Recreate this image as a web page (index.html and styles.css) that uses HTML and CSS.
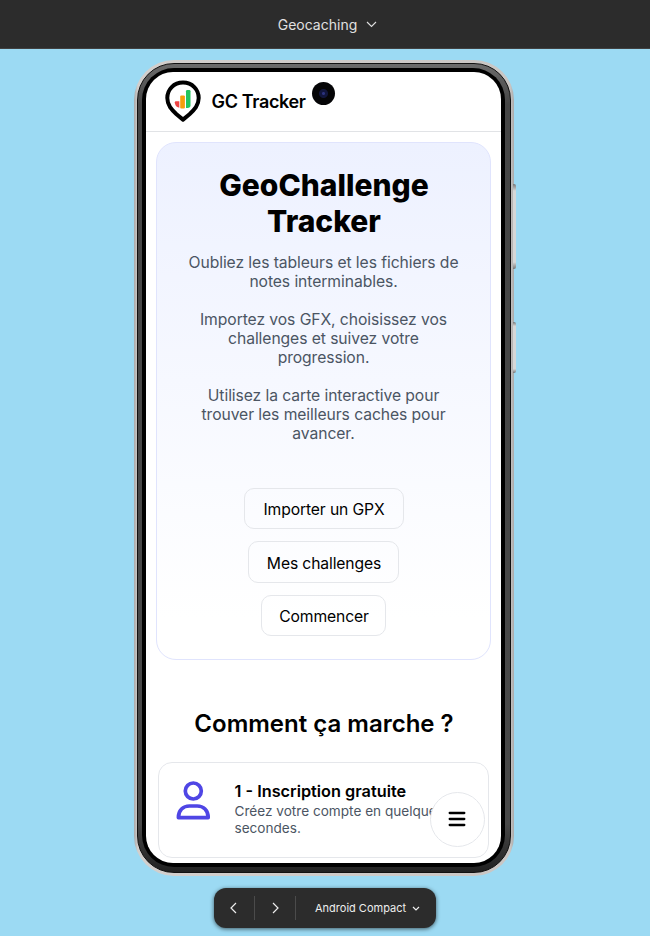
FILE: index.html
```html
<!DOCTYPE html>
<html lang="fr">
<head>
<meta charset="utf-8">
<title>Geocaching</title>
<link rel="stylesheet" href="styles.css">
</head>
<body>
<header class="topbar">
  <span>Geocaching</span>
  <svg width="11" height="7" viewBox="0 0 11 7" fill="none" stroke="#e0e0e0" stroke-width="1.1"><path d="M1 1l4.5 4.500L10 1"/></svg>
</header>
<main class="stage">
  <div class="phone">
    <i class="key volume"></i><i class="key power"></i>
    <div class="rim"><div class="bezel"><div class="screen">
      <div class="appbar">
        <svg class="logo" width="38" height="44" viewBox="0 0 38 44">
          <path d="M19 2.600C9.800 2.600 3.300 9.400 3.300 18.100c0 7.200 4.300 11.600 9.200 16.100L19 39.600l6.500-5.400c4.900-4.500 9.200-8.900 9.200-16.100C34.700 9.400 28.200 2.600 19 2.600z" fill="#fff" stroke="#000" stroke-width="4" stroke-linejoin="round"/>
          <path d="M10.800 22.300q0-1 1-1h3.500v6.400q-4.500-.8-4.500-5.400z" fill="#ef4444"/>
          <rect x="16.200" y="15.600" width="4.700" height="12.800" rx="1" fill="#f59e0b"/>
          <path d="M22 11.200q0-1.200 1.200-1.200h2.100q1.200 0 1.200 1.200v14q0 2.700-3 2.700H22z" fill="#22c55e"/>
        </svg>
        <span class="brand">GC Tracker</span>
        <i class="camera"></i>
      </div>
      <section class="hero">
        <h1>GeoChallenge<br>Tracker</h1>
        <p>Oubliez les tableurs et les fichiers de<br>notes interminables.</p>
        <p>Importez vos GFX, choisissez vos<br>challenges et suivez votre<br>progression.</p>
        <p>Utilisez la carte interactive pour<br>trouver les meilleurs caches pour<br>avancer.</p>
        <div class="actions">
          <a class="btn import">Importer un GPX</a>
          <a class="btn challenges">Mes challenges</a>
          <a class="btn start">Commencer</a>
        </div>
      </section>
      <h2>Comment ça marche ?</h2>
      <article class="step">
        <svg class="user" width="36" height="42" viewBox="0 0 36 42" fill="none" stroke="#4f46e5" stroke-width="3.7" stroke-linejoin="round"><circle cx="18.300" cy="11" r="8"/><path d="M3.400 37.600c0-7.400 4.800-11.600 11-11.600h7.800c6.200 0 11 4.200 11 11.600z"/></svg>
        <div>
          <h3>1 - Inscription gratuite</h3>
          <p>Créez votre compte en quelques<br>secondes.</p>
        </div>
      </article>
      <div class="menu"><svg width="18" height="16" viewBox="0 0 18 16" stroke="#000" stroke-width="2.3" stroke-linecap="round"><path d="M1.700 2h14.600M1.700 8h14.600M1.700 14h14.600"/></svg></div>
    </div></div></div>
  </div>
  <nav class="dock">
    <span class="arrow prev"><svg width="7" height="12" viewBox="0 0 7 12" fill="none" stroke="#eee" stroke-width="1.200"><path d="M6 1L1 6l5 5"/></svg></span>
    <span class="arrow"><svg width="7" height="12" viewBox="0 0 7 12" fill="none" stroke="#eee" stroke-width="1.200"><path d="M1 1l5 5-5 5"/></svg></span>
    <span class="device">Android Compact<svg width="8" height="5" viewBox="0 0 8 5" fill="none" stroke="#eee" stroke-width="1.200"><path d="M1 1l3 3 3-3"/></svg></span>
  </nav>
</main>
</body>
</html>
```
FILE: styles.css
```css
* { box-sizing: border-box; }
body { margin: 0; width: 650px; height: 936px; overflow: hidden; background: #9cdaf3; font-family: Inter, sans-serif; color: #000; }
svg { display: block; flex: none; }
h1, h2, h3, p { margin: 0; white-space: nowrap; }
.topbar { height: 49px; background: #2c2c2c; border-bottom: 1px solid #414141; color: #e0e0e0; font-size: 14px; display: flex; align-items: center; justify-content: center; gap: 9px; padding-left: 5px; }
.stage { display: flex; flex-direction: column; align-items: center; padding-top: 11px; }
.phone { position: relative; width: 380px; height: 816px; margin-right: 3px; padding: 3px; border-radius: 40px; background: linear-gradient(90deg, #aaa, #d2cfcd 1%, #c9c6c4 99%, #aaa); }
.rim { height: 100%; padding: 4px 5px 5px 4px; border-radius: 37px; background: linear-gradient(180deg, #6b6b6b, #454545 5%, #484848 94%, #202020); border: 1px solid #111; }
.bezel { height: 100%; padding: 4px; border-radius: 32px; background: #000; }
.screen { position: relative; height: 100%; overflow: hidden; border-radius: 27px; background: #fff; }
.key { position: absolute; left: 379px; width: 3px; border-radius: 0 2px 2px 0; background: linear-gradient(#777, #d5d7d7 8%, #d5d7d7 92%, #777); }
.volume { top: 124px; height: 85px; }
.power { top: 262px; height: 51px; }
.appbar { position: relative; height: 60px; border-bottom: 1px solid #e1e3e6; display: flex; align-items: center; padding-left: 18px; }
.brand { font-size: 18px; font-weight: 600; letter-spacing: -.34px; margin-left: 10px; }
.camera { position: absolute; left: 166px; top: 10px; width: 23px; height: 23px; border-radius: 50%; background: radial-gradient(circle, #2b327e 0 1px, #11153c 2px 4px, #050507 5px); }
.hero { margin: 10px 10px 0; height: 518px; border: 1px solid #e0e4fd; border-radius: 20px; background: linear-gradient(#edf1ff, #fff 92%); text-align: center; padding: 24px 0 0 1px; }
h1 { font-size: 30px; line-height: 36px; font-weight: 800; padding-left: 1px; }
.hero p { color: #4b5563; font-size: 15.700px; letter-spacing: -.08px; line-height: 19px; margin-bottom: 19px; }
.hero h1 + p { margin-top: 14px; }
.actions { display: flex; flex-direction: column; align-items: center; gap: 12px; margin-top: 44.500px; }
.btn { height: 41.500px; border: 1px solid #e5e7eb; border-radius: 10px; font-size: 15.700px; letter-spacing: -.13px; display: flex; align-items: center; justify-content: center; padding: 3px 0 0 1px; }
.import { width: 160px; }
.challenges { width: 151px; }
.start { width: 125px; }
h2 { text-align: center; font-size: 24px; line-height: 30px; font-weight: 600; margin-top: 49px; padding-left: 2px; }
.step { margin: 23px 12px 0; height: 96px; border: 1px solid #e5e7eb; border-radius: 14px; display: flex; padding: 17px 0 0 16px; }
.step > div { margin-left: 24px; padding-top: 1px; }
h3 { font-size: 16.300px; line-height: 21px; font-weight: 600; }
.step p { color: #4b5563; font-size: 13.600px; line-height: 16.500px; padding-top: 1px; }
.menu { position: absolute; left: 284px; top: 720px; width: 55px; height: 55px; border: 1px solid #e5e7eb; border-radius: 50%; background: #fff; display: grid; place-items: center; padding-bottom: 1px; }
.dock { width: 222px; height: 40px; margin-top: 12px; border-radius: 12px; background: #2c2c2c; box-shadow: 0 1px 4px #0009; display: flex; align-items: center; color: #eee; font-size: 11px; }
.arrow { width: 41px; height: 24px; border-right: 1px solid #4b4b4b; display: grid; place-items: center; }
.prev { padding-right: 2px; }
.device { display: flex; align-items: center; gap: 6px; margin-left: 19px; white-space: nowrap; }
```
